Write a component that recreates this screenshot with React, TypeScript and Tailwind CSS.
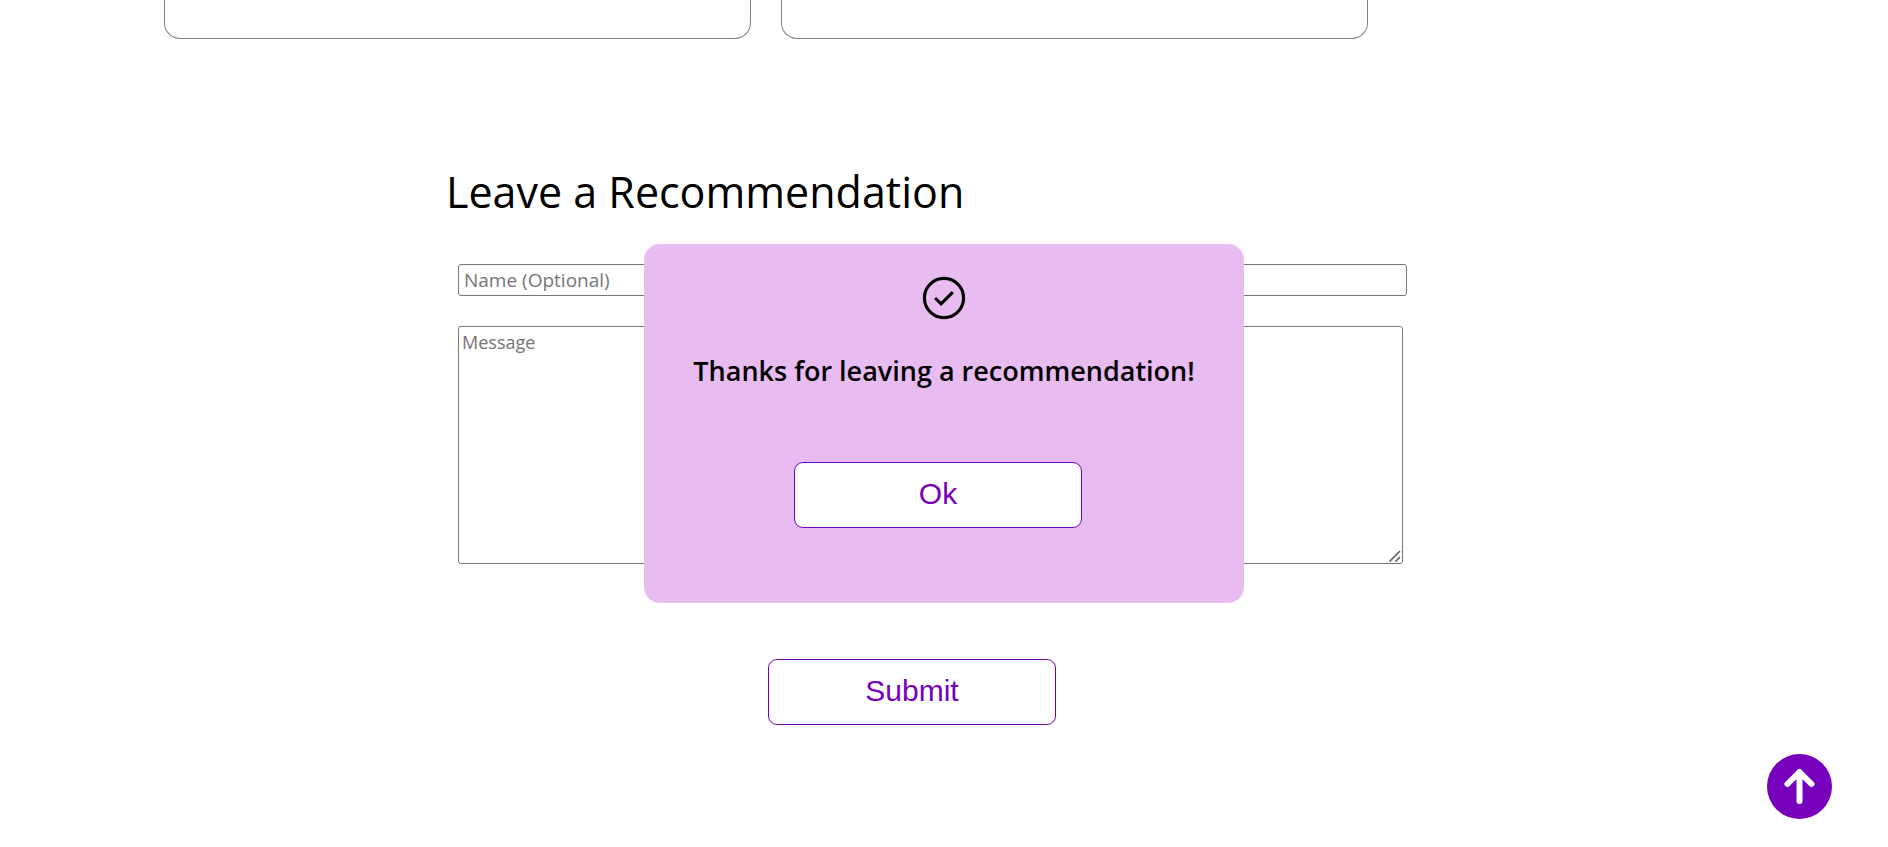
import React from "react";

const actionButton =
  "h-[66px] w-72 rounded-[9px] border border-[#7600bc] bg-white pb-0.5 font-['Liberation_Sans',Arial,sans-serif] text-[30px] leading-9 text-[#7600bc]";

function ConfirmationDialog() {
  return (
    <div className="pointer-events-none fixed inset-0 flex items-center justify-center">
      <div
        role="dialog"
        aria-labelledby="dialog-title"
        className="pointer-events-auto flex h-[359px] w-full max-w-[600px] flex-col items-center rounded-2xl bg-[#e8bcf0] pt-[29px]"
      >
        <svg
          className="size-[50px]"
          viewBox="0 0 24 24"
          fill="none"
          stroke="black"
          strokeWidth="1.5"
          aria-hidden="true"
        >
          <circle cx="12" cy="12" r="9.4" />
          <path d="M7.75 12l2.83 2.83 5.67-5.66" />
        </svg>
        <h2 id="dialog-title" className="mt-7 text-[27px] leading-10 font-semibold whitespace-nowrap">
          Thanks for leaving a recommendation!
        </h2>
        <button type="button" className={`${actionButton} mt-[71px] mr-3`}>
          Ok
        </button>
      </div>
    </div>
  );
}

export default function App() {
  return (
    <div className="bg-white font-['Trebuchet_MS','Open_Sans',sans-serif] text-black">
      <section className="grid max-w-[1368px] grid-cols-2 gap-[30px] pl-[164px]">
        <div className="h-[39px] rounded-b-2xl border border-t-0 border-[#808080]" />
        <div className="h-[39px] rounded-b-2xl border border-t-0 border-[#808080]" />
      </section>

      <form className="mx-auto flex max-w-[996px] flex-col pt-[121px]" onSubmit={(e) => e.preventDefault()}>
        <h1 className="text-[43px] leading-[64px]">Leave a Recommendation</h1>
        <input
          type="text"
          aria-label="Name (Optional)"
          placeholder="Name (Optional)"
          className="mt-10 mr-[35px] ml-3 h-8 rounded-[3px] border border-[#767676] bg-white px-[5px] text-[19px] placeholder:text-[#757575]"
        />
        <div className="relative mt-[30px] mr-[39px] ml-3 flex">
          <textarea
            aria-label="Message"
            placeholder="Message"
            className="h-[238px] w-full resize-none rounded-[3px] border border-[#767676] bg-white px-[3px] py-0.5 text-[18px] leading-[26px] placeholder:text-[#757575]"
          />
          <svg
            className="pointer-events-none absolute right-0.5 bottom-0.5 size-3"
            viewBox="0 0 12 12"
            fill="none"
            stroke="#555"
            strokeWidth="1.5"
            aria-hidden="true"
          >
            <path d="M0.5 11.5l10.5-10.5M6.5 11.5l4.5-4.5" />
          </svg>
        </div>
        <button type="submit" className={`${actionButton} mt-[95px] mr-16 self-center`}>
          Submit
        </button>
      </form>

      <ConfirmationDialog />

      <button
        type="button"
        aria-label="Back to top"
        className="fixed right-14 bottom-7 size-[65px] rounded-full bg-[#7600bc]"
      >
        <svg
          className="size-full"
          viewBox="0 0 65 65"
          fill="none"
          stroke="white"
          strokeWidth="6"
          strokeLinecap="round"
          strokeLinejoin="round"
          aria-hidden="true"
        >
          <path d="M32.5 47V18M20.5 30l12-12 12 12" />
        </svg>
      </button>
    </div>
  );
}
